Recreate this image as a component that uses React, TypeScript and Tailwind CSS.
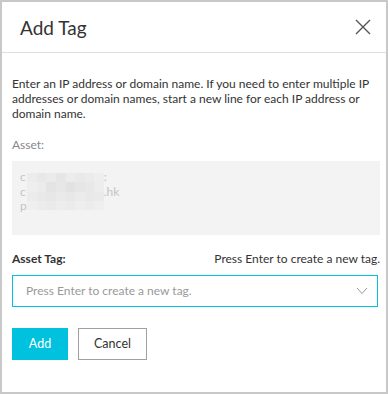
import React from "react";

const tiles = [
  "#ececec","#e8e8e8","#ebebeb","#e6e6e6","#ececec","#e9e9e9","#ebebeb","#eeeeee",
  "#eeeeee","#ececec","#e4e4e4","#e7e7e7","#e2e2e2","#e6e6e6","#e8e8e8","#ededed",
  "#ebebeb","#e9e9e9","#e7e7e7","#eaeaea","#e8e8e8","#ebebeb","#e9e9e9","#eaeaea",
  "#efefef","#ececec","#eaeaea","#ededed","#ebebeb","#eeeeee","#ececec","#efefef",
];

export default function App() {
  return (
    <div
      className="w-[388px] h-[394px] bg-white border-2 border-[#c8c8c8] flex flex-col text-[#333]"
      style={{ fontFamily: 'Lato, "Noto Sans", sans-serif' }}
    >
      <div className="h-[51px] shrink-0 border-b border-[#dedede] flex items-center justify-between pl-[18px] pr-[14px]">
        <span className="text-[19px] text-[#333] leading-none">Add Tag</span>
        <svg width="18" height="18" viewBox="0 0 18 18" className="text-[#555]">
          <path d="M2 2 L16 16 M16 2 L2 16" stroke="currentColor" strokeWidth="1.4" fill="none" />
        </svg>
      </div>
      <div className="flex flex-col pl-[10px] pr-[6px]">
        <p className="mt-[23px] text-[12px] leading-[15px] text-[#333]">
          Enter an IP address or domain name. If you need to enter multiple IP addresses or domain names, start a new line for each IP address or domain name.
        </p>
        <div className="mt-[16px] text-[12px] leading-[15px] text-[#888]">Asset:</div>
        <div className="mt-[9px] h-[74px] bg-[#f3f3f3] pl-[8px] pt-[9px] relative text-[12px] leading-[14.5px] text-[#c4c4c4]">
          <div>c<span className="inline-block w-[78px]" />:</div>
          <div>c<span className="inline-block w-[78px]" />.hk</div>
          <div>p</div>
          <div className="absolute left-[15px] top-[12px] w-[77px] h-[37px] grid grid-cols-8 grid-rows-4">
            {tiles.map((c, i) => (
              <div key={i} style={{ backgroundColor: c }} />
            ))}
          </div>
        </div>
        <div className="mt-[16px] flex items-center justify-between text-[12px] leading-[15px]">
          <span className="font-bold text-[#333]">Asset Tag:</span>
          <span className="text-[#333]">Press Enter to create a new tag.</span>
        </div>
        <div className="mt-[9px] mr-[2px] h-[32px] border border-[#00c1de] flex items-center justify-between pl-[13px] pr-[9px]">
          <span className="text-[12px] text-[#999]">Press Enter to create a new tag.</span>
          <svg width="12" height="8" viewBox="0 0 12 8">
            <path d="M1 1 L6 6.5 L11 1" stroke="#999" strokeWidth="1" fill="none" />
          </svg>
        </div>
        <div className="mt-[21px] flex gap-[10px]">
          <button className="w-[56px] h-[32px] bg-[#00c1de] text-white text-[12.5px]">Add</button>
          <button className="w-[69px] h-[32px] border border-[#a0a0a0] bg-white text-[#333] text-[12.5px]">Cancel</button>
        </div>
      </div>
    </div>
  );
}
